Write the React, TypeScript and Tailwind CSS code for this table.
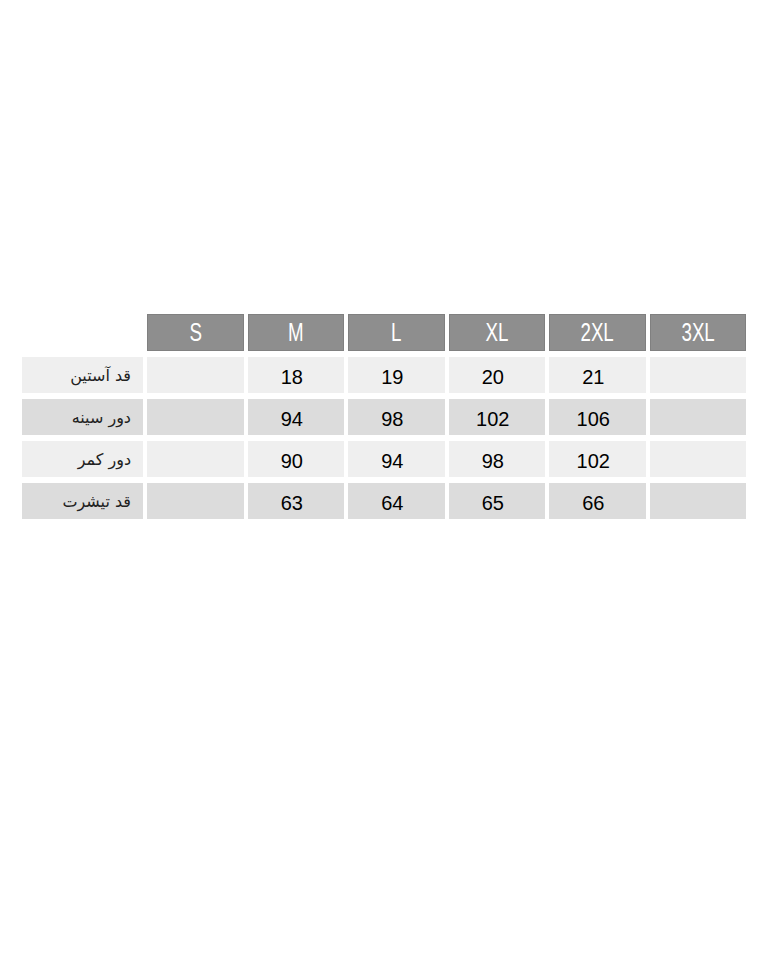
import { Fragment } from "react";

const sizes = ["S", "M", "L", "XL", "2XL", "3XL"];

const rows: { label: string; values: string[]; even: boolean }[] = [
  { label: "قد آستین", values: ["", "18", "19", "20", "21", ""], even: false },
  { label: "دور سینه", values: ["", "94", "98", "102", "106", ""], even: true },
  { label: "دور کمر", values: ["", "90", "94", "98", "102", ""], even: false },
  { label: "قد تیشرت", values: ["", "63", "64", "65", "66", ""], even: true },
];

const App = () => {
  return (
    <div className="min-h-[960px] w-[768px] bg-white pt-[314px] pl-[22px]">
      <div className="grid grid-cols-[121px_repeat(6,96.5px)] gap-x-[4px] gap-y-[6px] items-stretch">
        <div />
        {sizes.map((s) => (
          <div
            key={s}
            className="h-[37px] bg-[#8e8e8e] border border-[#808080] flex items-center justify-center text-white text-[26px] leading-none font-['Liberation_Sans',Arial,sans-serif]"
          >
            <span className="inline-block scale-x-[0.72] pb-[1px]">{s}</span>
          </div>
        ))}
        {rows.map((row) => (
          <Fragment key={row.label}>
            <div
              dir="rtl"
              className={`h-[36px] flex items-center pr-[12px] pt-[2px] text-[16px] text-[#222] font-['DejaVu_Sans',sans-serif] ${
                row.even ? "bg-[#dcdcdc]" : "bg-[#efefef]"
              }`}
            >
              {row.label}
            </div>
            {row.values.map((v, i) => (
              <div
                key={i}
                className={`h-[36px] flex items-center justify-center pt-[4px] pr-[8px] text-[20px] text-black font-['Liberation_Sans',Arial,sans-serif] ${
                  row.even ? "bg-[#dcdcdc]" : "bg-[#efefef]"
                }`}
              >
                {v}
              </div>
            ))}
          </Fragment>
        ))}
      </div>
    </div>
  );
};

export default App;
